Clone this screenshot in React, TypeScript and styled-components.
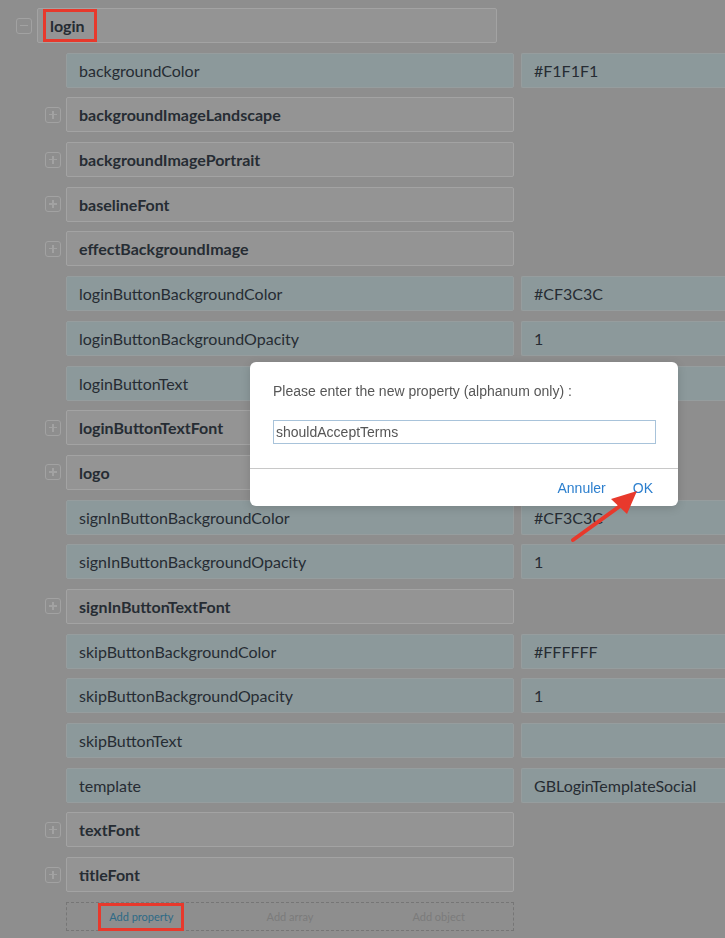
import React from 'react';
import styled, { createGlobalStyle } from 'styled-components';

const GlobalStyle = createGlobalStyle`
        html, body {
            margin: 0;
            padding: 0;
            background: #8e8e8e;
            font-family: Lato, "Open Sans", sans-serif;
            overflow: hidden;
        }
`

const TreeStyle = styled.div`
        width: 725px;
        height: 938px;
        box-sizing: border-box;
        padding-top: 8px;
        display: flex;
        flex-direction: column;
        gap: 9.7px;
`

const RowStyle = styled.div`
        display: flex;
        align-items: stretch;
        height: 35px;
`

const ToggleCell = styled.div<{ $width: number }>`
        width: ${p => p.$width}px;
        flex: none;
        display: flex;
        align-items: center;
        justify-content: flex-end;
        padding-right: 5px;
        box-sizing: border-box;
`

const ToggleIcon = styled.span`
        width: 14px;
        height: 14px;
        border: 1px solid #a2a2a2;
        border-radius: 3px;
        position: relative;
        &::before {
            content: '';
            position: absolute;
            left: 3px;
            right: 3px;
            top: 6px;
            height: 1.5px;
            background: #a2a2a2;
        }
`

const PlusIcon = styled(ToggleIcon)`
        &::after {
            content: '';
            position: absolute;
            top: 3px;
            bottom: 3px;
            left: 6px;
            width: 1.5px;
            background: #a2a2a2;
        }
`

const KeyBox = styled.div<{ $value?: boolean; $width: number }>`
        width: ${p => p.$width}px;
        flex: none;
        box-sizing: border-box;
        display: flex;
        align-items: center;
        padding-left: 12px;
        font-size: 16px;
        font-weight: ${p => (p.$value ? 400 : 700)};
        color: #262c33;
        background: ${p => (p.$value ? '#8c999b' : '#949494')};
        border: 1px solid ${p => (p.$value ? '#969d9e' : '#a3a3a3')};
        border-radius: 2px;
`

const ValueBox = styled.div`
        flex: 1;
        margin-left: 7px;
        box-sizing: border-box;
        display: flex;
        align-items: center;
        padding-left: 12px;
        font-size: 16px;
        color: #262c33;
        background: #8c999b;
        border: 1px solid #969d9e;
        border-right: none;
        border-radius: 2px 0 0 2px;
`

const LoginKey = styled(KeyBox)`
        padding-left: 5px;
`

const Highlight = styled.span`
        display: flex;
        align-items: center;
        height: 100%;
        box-sizing: border-box;
        border: 3px solid #e8392c;
        padding: 0 9px 0 4px;
`

const AddRow = styled.div`
        margin-left: 66px;
        width: 448px;
        height: 29px;
        box-sizing: border-box;
        border: 1px dashed #767676;
        display: grid;
        grid-template-columns: 1fr 1fr 1fr;
        align-items: center;
        justify-items: center;
        font-size: 11px;
`

const AddButton = styled.span<{ $active?: boolean }>`
        color: ${p => (p.$active ? '#2d6a86' : '#7b7b7b')};
        height: 28px;
        display: flex;
        align-items: center;
        box-sizing: border-box;
        ${p => p.$active && `
            border: 3px solid #e8392c;
            padding: 0 8px;
        `}
`

const ModalStyle = styled.div`
        position: fixed;
        left: 250px;
        top: 362px;
        width: 428px;
        height: 144px;
        background: #ffffff;
        border-radius: 6px;
        box-shadow: 0 2px 10px rgba(0, 0, 0, 0.15);
        font-family: "Liberation Sans", Arial, sans-serif;
        display: flex;
        flex-direction: column;
`

const ModalBody = styled.div`
        padding: 21px 22px 0 23px;
        height: 107px;
        box-sizing: border-box;
        border-bottom: 1px solid #c8c8c8;
`

const ModalText = styled.p`
        margin: 0 0 21px;
        font-size: 14px;
        color: #575757;
`

const ModalInput = styled.div`
        width: 383px;
        height: 24px;
        box-sizing: border-box;
        border: 1px solid #a8c3da;
        padding-left: 2px;
        display: flex;
        align-items: center;
        font-size: 14px;
        color: #555555;
`

const ModalActions = styled.div`
        flex: 1;
        display: flex;
        align-items: center;
        justify-content: flex-end;
        gap: 27px;
        padding-right: 25px;
        font-size: 14px;
        color: #2c7fce;
`

const ArrowSvg = styled.svg`
        position: fixed;
        left: 0;
        top: 0;
        pointer-events: none;
`

type Item = { key: string; value?: string; object?: boolean };

const items: Item[] = [
    { key: 'backgroundColor', value: '#F1F1F1' },
    { key: 'backgroundImageLandscape', object: true },
    { key: 'backgroundImagePortrait', object: true },
    { key: 'baselineFont', object: true },
    { key: 'effectBackgroundImage', object: true },
    { key: 'loginButtonBackgroundColor', value: '#CF3C3C' },
    { key: 'loginButtonBackgroundOpacity', value: '1' },
    { key: 'loginButtonText', value: '' },
    { key: 'loginButtonTextFont', object: true },
    { key: 'logo', object: true },
    { key: 'signInButtonBackgroundColor', value: '#CF3C3C' },
    { key: 'signInButtonBackgroundOpacity', value: '1' },
    { key: 'signInButtonTextFont', object: true },
    { key: 'skipButtonBackgroundColor', value: '#FFFFFF' },
    { key: 'skipButtonBackgroundOpacity', value: '1' },
    { key: 'skipButtonText', value: '' },
    { key: 'template', value: 'GBLoginTemplateSocial' },
    { key: 'textFont', object: true },
    { key: 'titleFont', object: true },
];

const App: React.FC = () => {
    return <>
        <GlobalStyle />
        <TreeStyle>
            <RowStyle>
                <ToggleCell $width={37}>
                    <ToggleIcon />
                </ToggleCell>
                <LoginKey $width={460}>
                    <Highlight>login</Highlight>
                </LoginKey>
            </RowStyle>
            {items.map(item =>
                <RowStyle key={item.key}>
                    <ToggleCell $width={66}>
                        {item.object && <PlusIcon />}
                    </ToggleCell>
                    <KeyBox $width={448} $value={!item.object}>{item.key}</KeyBox>
                    {!item.object && <ValueBox>{item.value}</ValueBox>}
                </RowStyle>
            )}
            <AddRow>
                <AddButton $active>Add property</AddButton>
                <AddButton>Add array</AddButton>
                <AddButton>Add object</AddButton>
            </AddRow>
        </TreeStyle>
        <ModalStyle>
            <ModalBody>
                <ModalText>Please enter the new property (alphanum only) :</ModalText>
                <ModalInput>shouldAcceptTerms</ModalInput>
            </ModalBody>
            <ModalActions>
                <span>Annuler</span>
                <span>OK</span>
            </ModalActions>
        </ModalStyle>
        <ArrowSvg width="725" height="938" viewBox="0 0 725 938">
            <line x1="573" y1="540" x2="620" y2="506" stroke="#e8392c" strokeWidth="4" strokeLinecap="round" />
            <polygon points="637,491 611,499 627,514" fill="#e8392c" />
        </ArrowSvg>
    </>
};

export default App;
